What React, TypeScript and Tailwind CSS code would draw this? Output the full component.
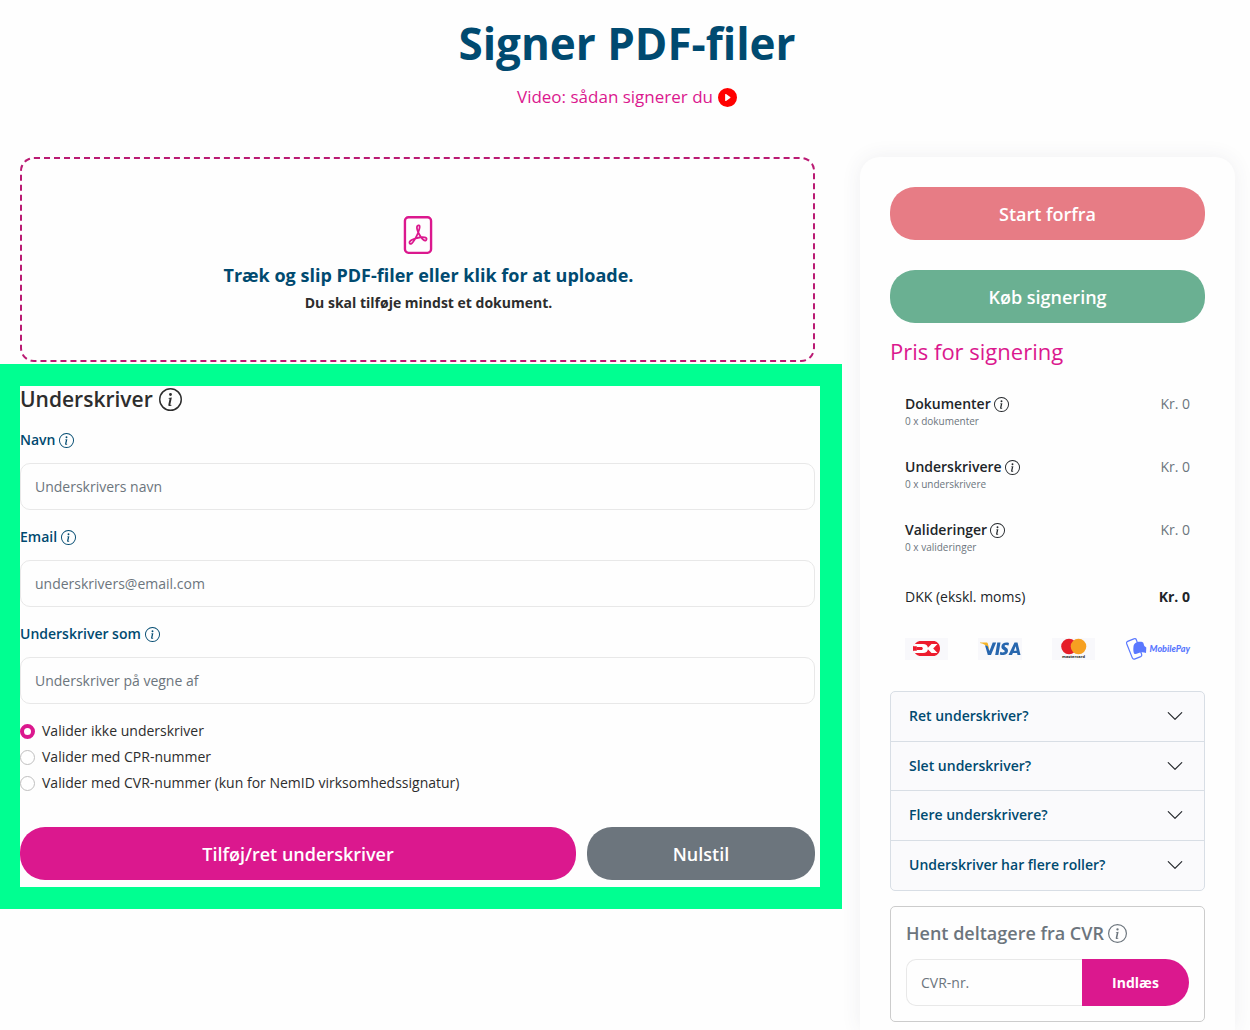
import { useState } from "react";
import type { ReactNode } from "react";
import { BsChevronDown, BsFilePdf, BsInfoCircle, BsPlayCircleFill } from "react-icons/bs";

function Info({ className }: { className: string }) {
  return <BsInfoCircle aria-hidden className={`shrink-0 ${className}`} />;
}

function Field({ id, label, placeholder, type = "text" }: { id: string; label: string; placeholder: string; type?: string }) {
  return (
    <div className="mb-4">
      <label htmlFor={id} className="flex h-[22px] items-center gap-1 text-sm font-semibold text-[#004a70]">
        {label}
        <Info className="size-[15px]" />
      </label>
      <input
        id={id}
        type={type}
        placeholder={placeholder}
        className="mt-3 block h-[47px] w-full rounded-[10px] border border-[#e8e8e8] bg-[#fefefe] px-[14px] text-sm placeholder:text-[#6c757d]"
      />
    </div>
  );
}

function PriceRow({ title, detail }: { title: string; detail: string }) {
  return (
    <div className="flex h-[63px] items-start justify-between text-sm">
      <div>
        <div className="flex h-[22px] items-center gap-[3px] font-semibold text-[#212529]">
          {title}
          <Info className="size-[15px]" />
        </div>
        <div className="text-[10px] leading-3 text-[#6c757d]">{detail}</div>
      </div>
      <span className="leading-[22px] text-[#6c757d]">Kr. 0</span>
    </div>
  );
}

function PillButton({ className, children }: { className: string; children: ReactNode }) {
  return (
    <button type="button" className={`h-[53px] rounded-[25px] text-lg font-semibold text-white ${className}`}>
      {children}
    </button>
  );
}

function Dankort() {
  return (
    <svg role="img" aria-label="Dankort" viewBox="0 0 43 22" className="h-[22px] w-[43px]">
      <rect width="43" height="22" fill="#f8f8fb" />
      <path d="M14.500 3h15c3.500 1 5.500 4 5.500 7.500S33 17 29.500 18h-15c-3-.8-5-2.800-5.800-5H8V8h.7c.8-2.200 2.800-4.200 5.800-5z" fill="#ed1c2e" />
      <path d="M9.500 6H18c3 0 4.700 1.700 4.900 3.800L26.500 6h6l-4.300 4.500 4.300 4.500h-6l-3.600-3.800C22.700 13.300 21 15 18 15H9.500c-.5-.6-.9-1.300-1.200-2.300h3.500V8.300H8.300C8.600 7.300 9 6.600 9.500 6z" fill="#fff" />
      <path d="M11.500 9h4.700c1 0 1.600.6 1.600 1.500s-.6 1.500-1.600 1.500h-4.700z" fill="#ed1c2e" />
    </svg>
  );
}

function Visa() {
  return (
    <svg role="img" aria-label="Visa" viewBox="0 0 44 22" className="h-[22px] w-[44px]">
      <rect width="44" height="22" fill="#f8f8fb" />
      <path d="M2 4.500h6.200c1 0 1.500.4 1.700 1.300l1.500 6C9.500 8 6 5.800 2 5z" fill="#f5b324" />
      <path d="M9.500 8l2 5 3.200-8.500h3.500L13 17H9.800L7 7.200zM19.300 4.500h3.200L20.400 17h-3.200z" fill="#2766ae" />
      <path d="M31 4.900l-.5 2.600c-1.800-.8-3.800-.7-3.900.4 0 1.200 3.600 1.600 3.400 4.800-.2 3.900-4.700 5.200-8.200 3.800l.5-2.700c2 1 4.300.9 4.400-.5.100-1.500-3.500-1.600-3.300-4.800.200-3.600 4.300-4.900 7.600-3.600z" fill="#2766ae" />
      <path fillRule="evenodd" d="M36.500 4.500h3L42.500 17h-3l-.4-1.900h-4.200L34 17h-3.500zM37.700 8.200l-1.800 4.500h2.700z" fill="#2766ae" />
    </svg>
  );
}

function Mastercard() {
  return (
    <svg role="img" aria-label="Mastercard" viewBox="0 0 43 22" className="h-[22px] w-[43px]">
      <rect width="43" height="22" fill="#f8f8fb" />
      <circle cx="17" cy="8.500" r="7.800" fill="#e51e29" />
      <circle cx="26.500" cy="8.500" r="7.800" fill="#f6a021" />
      <text x="21.500" y="20" textAnchor="middle" fontSize="4" fontWeight="700" fill="#222222">
        mastercard
      </text>
    </svg>
  );
}

function MobilePay() {
  return (
    <div className="flex items-center gap-[3px] text-[#5a78ff]">
      <svg aria-hidden viewBox="0 0 22 24" className="h-6 w-[22px]">
        <path
          d="M9.500 1.600 2.600 4.400c-.9.400-1.300 1.200-1 2.100l5.800 14.600c.4.900 1.200 1.300 2.100 1l6.200-2.500c.9-.4 1.300-1.200 1-2.100L11.400 3c-.4-1-1-1.800-1.900-1.400z"
          fill="none"
          stroke="currentColor"
          strokeWidth="1.200"
        />
        <path d="M8.500 9.500c.3-2.800 3-4.900 7-4.700 1.300.1 2 .4 2.800.9l1 3.300 2 1.500-.3 5.500c-2.500-.9-5.500-.9-8 .3-1.700.8-2.800 1-4 .2-.8-2.500-.8-4.500-.5-7z" fill="currentColor" />
      </svg>
      <span className="font-['Lato'] text-[9px] font-black italic">MobilePay</span>
    </div>
  );
}

const validations = [
  "Valider ikke underskriver",
  "Valider med CPR-nummer",
  "Valider med CVR-nummer (kun for NemID virksomhedssignatur)",
];

const questions = ["Ret underskriver?", "Slet underskriver?", "Flere underskrivere?", "Underskriver har flere roller?"];

export default function App() {
  const [validation, setValidation] = useState(0);

  return (
    <main className="overflow-x-hidden bg-[#fefefe] font-['Open_Sans',sans-serif] text-[#212529]">
      <header className="flex h-[157px] flex-col items-center pt-[11px] pl-1">
        <h1 className="text-[44px] leading-[64px] font-bold text-[#004a70]">Signer PDF-filer</h1>
        <a href="#video" className="mt-[9px] flex items-center gap-[5px] text-[17px] leading-[26px] text-[#db188e]">
          Video: sådan signerer du
          <BsPlayCircleFill aria-hidden className="size-[19px] text-[#ff0000]" />
        </a>
      </header>

      <div className="flex gap-[18px] pr-[15px]">
        <div className="min-w-0 flex-1">
          <button
            type="button"
            className="mr-[27px] ml-5 flex h-[205px] w-[calc(100%-47px)] flex-col items-center rounded-[14px] border-2 border-dashed border-[#ba1a73] pt-[57px]"
          >
            <BsFilePdf aria-hidden className="size-[38px] text-[#db188e]" />
            <span className="mt-2 pl-[22px] text-lg leading-[26px] font-bold text-[#004a70]">
              Træk og slip PDF-filer eller klik for at uploade.
            </span>
            <span className="mt-1 pl-[22px] text-sm leading-[22px] font-bold text-[#2d2d2d]">
              Du skal tilføje mindst et dokument.
            </span>
          </button>

          <form className="mt-0.5 border-[22px] border-l-[20px] border-[#00ff91] pr-[5px] pb-[7px]">
            <h2 className="mb-4 flex h-[27px] items-center gap-1.5 text-[21px] font-semibold text-[#2d2d2d]">
              Underskriver
              <Info className="size-[23px]" />
            </h2>
            <Field id="name" label="Navn" placeholder="Underskrivers navn" />
            <Field id="email" label="Email" placeholder="underskrivers@email.com" type="email" />
            <Field id="role" label="Underskriver som" placeholder="Underskriver på vegne af" />

            <fieldset className="-mt-0.5">
              {validations.map((text, i) => (
                <label key={text} className="flex h-[26px] items-center gap-[7px] text-sm text-[#2d2d2d]">
                  <input
                    type="radio"
                    name="validation"
                    checked={validation === i}
                    onChange={() => setValidation(i)}
                    className="size-[15px] shrink-0 appearance-none rounded-full border border-[#bfbfbf] bg-white checked:border-4 checked:border-[#db188e]"
                  />
                  {text}
                </label>
              ))}
            </fieldset>

            <div className="mt-[31px] flex gap-[11px]">
              <PillButton className="flex-[556] bg-[#db188e]">Tilføj/ret underskriver</PillButton>
              <PillButton className="flex-[228] bg-[#6c757d]">Nulstil</PillButton>
            </div>
          </form>
        </div>

        <aside className="w-[375px] shrink-0 rounded-t-[20px] bg-[#fefefe] px-[30px] pt-[30px] pb-2 shadow-[0_0_20px_rgba(60,60,90,0.08)]">
          <PillButton className="w-full bg-[#e77c85]">Start forfra</PillButton>
          <PillButton className="mt-[30px] w-full bg-[#6ab092]">Køb signering</PillButton>
          <h2 className="mt-[15px] text-[22px] leading-[26px] font-medium text-[#db188e]">Pris for signering</h2>

          <div className="mt-[29px] px-[15px]">
            <PriceRow title="Dokumenter" detail="0 x dokumenter" />
            <PriceRow title="Underskrivere" detail="0 x underskrivere" />
            <PriceRow title="Valideringer" detail="0 x valideringer" />
            <div className="mt-1 flex justify-between text-sm leading-[22px]">
              <span>DKK (ekskl. moms)</span>
              <strong>Kr. 0</strong>
            </div>
            <div className="mt-[29px] flex items-center justify-between">
              <Dankort />
              <Visa />
              <Mastercard />
              <MobilePay />
            </div>
          </div>

          <div className="mt-[30px] grid h-[200px] auto-rows-fr divide-y divide-[#d8dee5] rounded-[5px] border border-[#d8dee5] bg-[#fafafc]">
            {questions.map((question) => (
              <button
                key={question}
                type="button"
                className="flex w-full items-center justify-between pr-5 pl-[18px] text-sm font-semibold text-[#004a70]"
              >
                {question}
                <BsChevronDown aria-hidden className="size-[18px] text-[#212529]" />
              </button>
            ))}
          </div>

          <section className="mt-[15px] rounded-[5px] border border-[#cccccc] p-[15px]">
            <label htmlFor="cvr" className="flex h-[22px] items-center gap-1 text-lg font-semibold text-[#6c757d]">
              Hent deltagere fra CVR
              <Info className="size-[19px]" />
            </label>
            <div className="mt-[15px] flex h-[47px]">
              <input
                id="cvr"
                placeholder="CVR-nr."
                className="min-w-0 flex-1 rounded-l-[10px] border border-r-0 border-[#e8e8e8] bg-[#fefefe] px-[14px] text-sm placeholder:text-[#6c757d]"
              />
              <button type="button" className="w-[107px] rounded-r-[25px] bg-[#db188e] text-sm font-bold text-white">
                Indlæs
              </button>
            </div>
          </section>
        </aside>
      </div>
    </main>
  );
}
